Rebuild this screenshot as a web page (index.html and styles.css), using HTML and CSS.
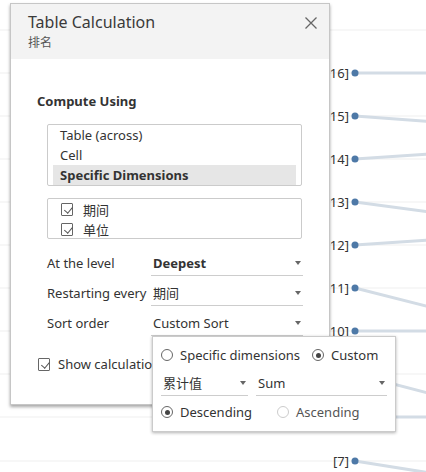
FILE: index.html
```html
<!DOCTYPE html>
<html>
<head>
<meta charset="utf-8">
<link rel="stylesheet" href="styles.css">
</head>
<body>
<div class="stage">
  <svg class="chart" width="426" height="472" viewBox="0 0 426 472">
    <g class="grid">
      <line x1="0" y1="30" x2="426" y2="30"/>
      <line x1="0" y1="73" x2="426" y2="73"/>
      <line x1="0" y1="116" x2="426" y2="116"/>
      <line x1="0" y1="159" x2="426" y2="159"/>
      <line x1="0" y1="202" x2="426" y2="202"/>
      <line x1="0" y1="245" x2="426" y2="245"/>
      <line x1="0" y1="288" x2="426" y2="288"/>
      <line x1="0" y1="331" x2="426" y2="331"/>
      <line x1="0" y1="374" x2="426" y2="374"/>
      <line x1="0" y1="417" x2="426" y2="417"/>
      <line x1="0" y1="461" x2="426" y2="461"/>
    </g>
    <g class="links">
      <line x1="355" y1="73" x2="430" y2="73"/>
      <line x1="355" y1="116" x2="430" y2="121.5"/>
      <line x1="355" y1="159" x2="430" y2="154"/>
      <line x1="355" y1="202" x2="430" y2="212"/>
      <line x1="355" y1="245" x2="430" y2="240"/>
      <line x1="355" y1="288" x2="430" y2="307"/>
      <line x1="355" y1="331" x2="430" y2="331"/>
      <line x1="355" y1="374" x2="430" y2="393.5"/>
      <line x1="355" y1="417" x2="430" y2="417"/>
      <line x1="355" y1="461" x2="430" y2="473"/>
    </g>
    <g class="dots">
      <circle cx="355" cy="73" r="3.5"/>
      <circle cx="355" cy="116" r="3.5"/>
      <circle cx="355" cy="159" r="3.5"/>
      <circle cx="355" cy="202" r="3.5"/>
      <circle cx="355" cy="245" r="3.5"/>
      <circle cx="355" cy="288" r="3.5"/>
      <circle cx="355" cy="331" r="3.5"/>
      <circle cx="355" cy="374" r="3.5"/>
      <circle cx="355" cy="417" r="3.5"/>
      <circle cx="355" cy="461" r="3.5"/>
    </g>
    <g class="labels">
      <text x="349" y="78">[16]</text>
      <text x="349" y="121">[15]</text>
      <text x="349" y="164">[14]</text>
      <text x="349" y="207">[13]</text>
      <text x="349" y="250">[12]</text>
      <text x="349" y="293">[11]</text>
      <text x="349" y="336">[10]</text>
      <text x="349" y="466">[7]</text>
    </g>
  </svg>

  <div class="dialog">
    <div class="dlg-head">
      <div class="titles">
        <div class="title">Table Calculation</div>
        <div class="subtitle">排名</div>
      </div>
      <svg class="close" width="12" height="12" viewBox="0 0 12 12"><path d="M0.5 0.5 L11.5 11.5 M11.5 0.5 L0.5 11.5"/></svg>
    </div>
    <div class="dlg-body">
      <div class="section-title">Compute Using</div>
      <div class="listbox">
        <div class="item">Table (across)</div>
        <div class="item">Cell</div>
        <div class="item selected">Specific Dimensions</div>
      </div>
      <div class="checkbox-list">
        <div class="check-row"><span class="cb checked"></span><span class="cb-label">期间</span></div>
        <div class="check-row"><span class="cb checked"></span><span class="cb-label">单位</span></div>
      </div>
      <div class="form-rows">
        <div class="form-row">
          <span class="form-label">At the level</span>
          <div class="select"><span class="sel-text bold">Deepest</span><span class="caret"></span></div>
        </div>
        <div class="form-row">
          <span class="form-label">Restarting every</span>
          <div class="select"><span class="sel-text">期间</span><span class="caret"></span></div>
        </div>
        <div class="form-row">
          <span class="form-label">Sort order</span>
          <div class="select"><span class="sel-text">Custom Sort</span><span class="caret"></span></div>
        </div>
      </div>
      <div class="show-row"><span class="cb checked"></span><span class="cb-label clip">Show calculation assistance</span></div>
    </div>
  </div>

  <div class="popup">
    <div class="pop-row">
      <label class="radio-opt"><span class="radio"></span>Specific dimensions</label>
      <label class="radio-opt"><span class="radio on"></span>Custom</label>
    </div>
    <div class="pop-row selects">
      <div class="select small"><span class="sel-text">累计值</span><span class="caret"></span></div>
      <div class="select wide"><span class="sel-text">Sum</span><span class="caret"></span></div>
    </div>
    <div class="pop-row">
      <label class="radio-opt desc"><span class="radio on"></span>Descending</label>
      <label class="radio-opt disabled"><span class="radio"></span>Ascending</label>
    </div>
  </div>
</div>
</body>
</html>
```

FILE: styles.css
```css
* { box-sizing: border-box; }
html, body { margin: 0; padding: 0; }
body {
  width: 426px;
  height: 472px;
  overflow: hidden;
  background: #fff;
  font-family: "Noto Sans", "Noto Sans CJK SC", sans-serif;
  font-size: 13px;
  color: #333;
}
.stage { position: relative; width: 426px; height: 472px; }
.chart { position: absolute; left: 0; top: 0; }
.grid line { stroke: #efefef; stroke-width: 1; }
.links line { stroke: #d3dce5; stroke-width: 3; }
.dots circle { fill: #4e79a7; }
.labels text {
  font-family: "Noto Sans", sans-serif;
  font-size: 13px;
  fill: #333;
  text-anchor: end;
}

.dialog {
  position: absolute;
  left: 10px;
  top: 3px;
  width: 320px;
  height: 402px;
  background: #fff;
  border: 1px solid #c6c6c6;
  box-shadow: 0 2px 3px rgba(0,0,0,0.35);
  display: flex;
  flex-direction: column;
}
.dlg-head {
  height: 55px;
  background: #f3f3f3;
  display: flex;
  justify-content: space-between;
  align-items: flex-start;
  padding: 7px 12px 0 17px;
}
.title { font-size: 16px; line-height: 22px; color: #3a3a3a; }
.subtitle { font-size: 12px; line-height: 16px; margin-top: 2px; color: #555; }
.close { margin-top: 6px; }
.close path { stroke: #666; stroke-width: 1.3; fill: none; }

.dlg-body { padding: 0 0 0 26px; }
.section-title {
  margin-top: 33px;
  font-weight: bold;
  line-height: 18px;
  font-size: 13px;
}
.listbox {
  margin: 14px 0 0 10px;
  width: 255px;
  height: 62px;
  border: 1px solid #cbcbcb;
  border-radius: 2px;
  padding: 0 5px;
}
.item { line-height: 20px; padding-left: 7px; }
.item.selected { background: #e6e6e6; font-weight: bold; }

.checkbox-list {
  margin: 12px 0 0 10px;
  width: 255px;
  height: 41px;
  border: 1px solid #cbcbcb;
  border-radius: 2px;
  padding: 0 0 0 13px;
}
.check-row { display: flex; align-items: center; height: 20px; }
.cb {
  width: 12px;
  height: 13px;
  border: 1px solid #666;
  border-radius: 1px;
  position: relative;
  flex: none;
}
.cb.checked::after {
  content: "";
  position: absolute;
  left: 3.5px;
  top: 1px;
  width: 3.5px;
  height: 7px;
  border: solid #555;
  border-width: 0 1.4px 1.4px 0;
  transform: rotate(40deg);
}
.cb-label { margin-left: 10px; }

.form-rows {
  margin: 13px 0 0 10px;
  display: flex;
  flex-direction: column;
  gap: 6px;
}
.form-row { display: flex; height: 24px; }
.form-label { width: 104px; line-height: 22px; }
.select {
  display: flex;
  align-items: center;
  justify-content: space-between;
  border-bottom: 1px solid #cdcdcd;
  width: 152px;
  height: 24px;
  padding: 0 1px 1px 2px;
}
.sel-text { line-height: 22px; }
.bold { font-weight: bold; }
.caret {
  width: 0; height: 0;
  border-left: 3.5px solid transparent;
  border-right: 3.5px solid transparent;
  border-top: 4px solid #666;
  margin-right: 1px;
}

.show-row {
  margin-top: 18px;
  display: flex;
  align-items: center;
  height: 20px;
  padding-left: 1px;
}
.show-row .cb-label { margin-left: 8px; white-space: nowrap; }
.cb-label.clip { width: 94px; overflow: hidden; }

.popup {
  position: absolute;
  left: 152px;
  top: 336px;
  width: 244px;
  height: 96px;
  background: #fff;
  border: 1px solid #cbcbcb;
  box-shadow: 0 1px 3px rgba(0,0,0,0.3);
  padding: 8px 8px 0 8px;
  display: flex;
  flex-direction: column;
}
.pop-row { display: flex; align-items: center; height: 20px; }
.pop-row.selects { height: 24px; margin-top: 7px; gap: 8px; align-items: flex-end; }
.pop-row.selects + .pop-row { margin-top: 6px; }
.radio-opt { display: flex; align-items: center; margin-right: 12px; white-space: nowrap; }
.radio-opt.desc { width: 116px; margin-right: 0; }
.radio {
  width: 12px;
  height: 12px;
  border: 1px solid #666;
  border-radius: 50%;
  margin-right: 7px;
  position: relative;
  flex: none;
}
.radio.on::after {
  content: "";
  position: absolute;
  left: 2.5px;
  top: 2.5px;
  width: 5px;
  height: 5px;
  border-radius: 50%;
  background: #444;
}
.radio-opt.disabled { color: #555; }
.radio-opt.disabled .radio { border-color: #ccc; }
.select.small { width: 87px; }
.select.wide { width: 131px; }
```
